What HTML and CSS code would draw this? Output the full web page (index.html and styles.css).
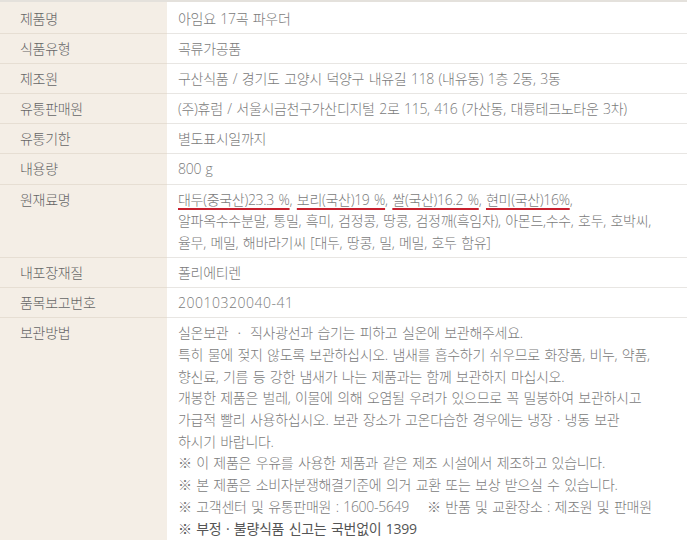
FILE: index.html
```html
<!DOCTYPE html>
<html lang="ko">
<head>
<meta charset="UTF-8">
<meta name="viewport" content="width=device-width, initial-scale=1.0">
<title>상품정보제공고시</title>
<link rel="stylesheet" href="styles.css">
</head>
<body>
<div class="info">
  <div class="row first"><div class="label">제품명</div><div class="value">아임요 17곡 파우더</div></div>
  <div class="row"><div class="label">식품유형</div><div class="value">곡류가공품</div></div>
  <div class="row"><div class="label">제조원</div><div class="value">구산식품 / 경기도 고양시 덕양구 내유길 118 (내유동) 1층 2동, 3동</div></div>
  <div class="row"><div class="label">유통판매원</div><div class="value">(주)휴럼 / 서울시금천구가산디지털 2로 115, 416 (가산동, 대륭테크노타운 3차)</div></div>
  <div class="row"><div class="label">유통기한</div><div class="value">별도표시일까지</div></div>
  <div class="row"><div class="label">내용량</div><div class="value">800 g</div></div>
  <div class="row">
    <div class="label">원재료명</div>
    <div class="value">
      <span class="mark">대두(중국산)23.3 %</span>, <span class="mark">보리(국산)19 %</span>, <span class="mark">쌀(국산)16.2 %</span>, <span class="mark">현미(국산)16%</span>,<br>
      알파옥수수분말, 통밀, 흑미, 검정콩, 땅콩, 검정깨(흑임자), 아몬드,수수, 호두, 호박씨,<br>
      율무, 메밀, 해바라기씨 [대두, 땅콩, 밀, 메밀, 호두 함유]
    </div>
  </div>
  <div class="row"><div class="label">내포장재질</div><div class="value">폴리에티렌</div></div>
  <div class="row"><div class="label">품목보고번호</div><div class="value num">20010320040-41</div></div>
  <div class="row last">
    <div class="label">보관방법</div>
    <div class="value">
      실온보관 ㆍ 직사광선과 습기는 피하고 실온에 보관해주세요.<br>
      특히 물에 젖지 않도록 보관하십시오. 냄새를 흡수하기 쉬우므로 화장품, 비누, 약품,<br>
      향신료, 기름 등 강한 냄새가 나는 제품과는 함께 보관하지 마십시오.<br>
      개봉한 제품은 벌레, 이물에 의해 오염될 우려가 있으므로 꼭 밀봉하여 보관하시고<br>
      가급적 빨리 사용하십시오. 보관 장소가 고온다습한 경우에는 냉장 · 냉동 보관<br>
      하시기 바랍니다.<br>
      ※ 이 제품은 우유를 사용한 제품과 같은 제조 시설에서 제조하고 있습니다.<br>
      ※ 본 제품은 소비자분쟁해결기준에 의거 교환 또는 보상 받으실 수 있습니다.<br>
      ※ 고객센터 및 유통판매원 : 1600-5649 &nbsp;&nbsp;&nbsp;※ 반품 및 교환장소 : 제조원 및 판매원<br>
      <span class="strong">※ 부정 · 불량식품 신고는 국번없이 1399</span>
    </div>
  </div>
</div>
</body>
</html>
```

FILE: styles.css
```css
body {
  margin:0;
  background:#fff;
  font-family:"Open Sans", "Noto Sans CJK KR", sans-serif;
  font-weight:300;
  font-size:14px;
  line-height:21.7px;
  color:#7b7b7b;
  letter-spacing:-0.3px;
  word-spacing:1.2px;
}
.info {border-top:2px solid #e4e1dc;}
.row {display:flex; border-bottom:1px solid #e8e6e3;}
.row.first .label, .row.first .value {padding-top:6px;}
.row.last {border-bottom:none; min-height:240px;}
.label {
  flex:0 0 147px;
  padding:4px 0 3.4px 20px;
  background:#f4eee6;
  color:#666;
  border-bottom:1px solid #e6ded3;
  margin-bottom:-1px;
}
.last .label {border-bottom:none; margin-bottom:0;}
.value {flex:1; padding:4px 0 3.4px 11px;}
.num {letter-spacing:0.5px;}
.mark {
  text-decoration:underline;
  text-decoration-color:#c8202e;
  text-decoration-thickness:2px;
  text-underline-offset:3px;
}
.strong {color:#555; font-weight:400;}
```
